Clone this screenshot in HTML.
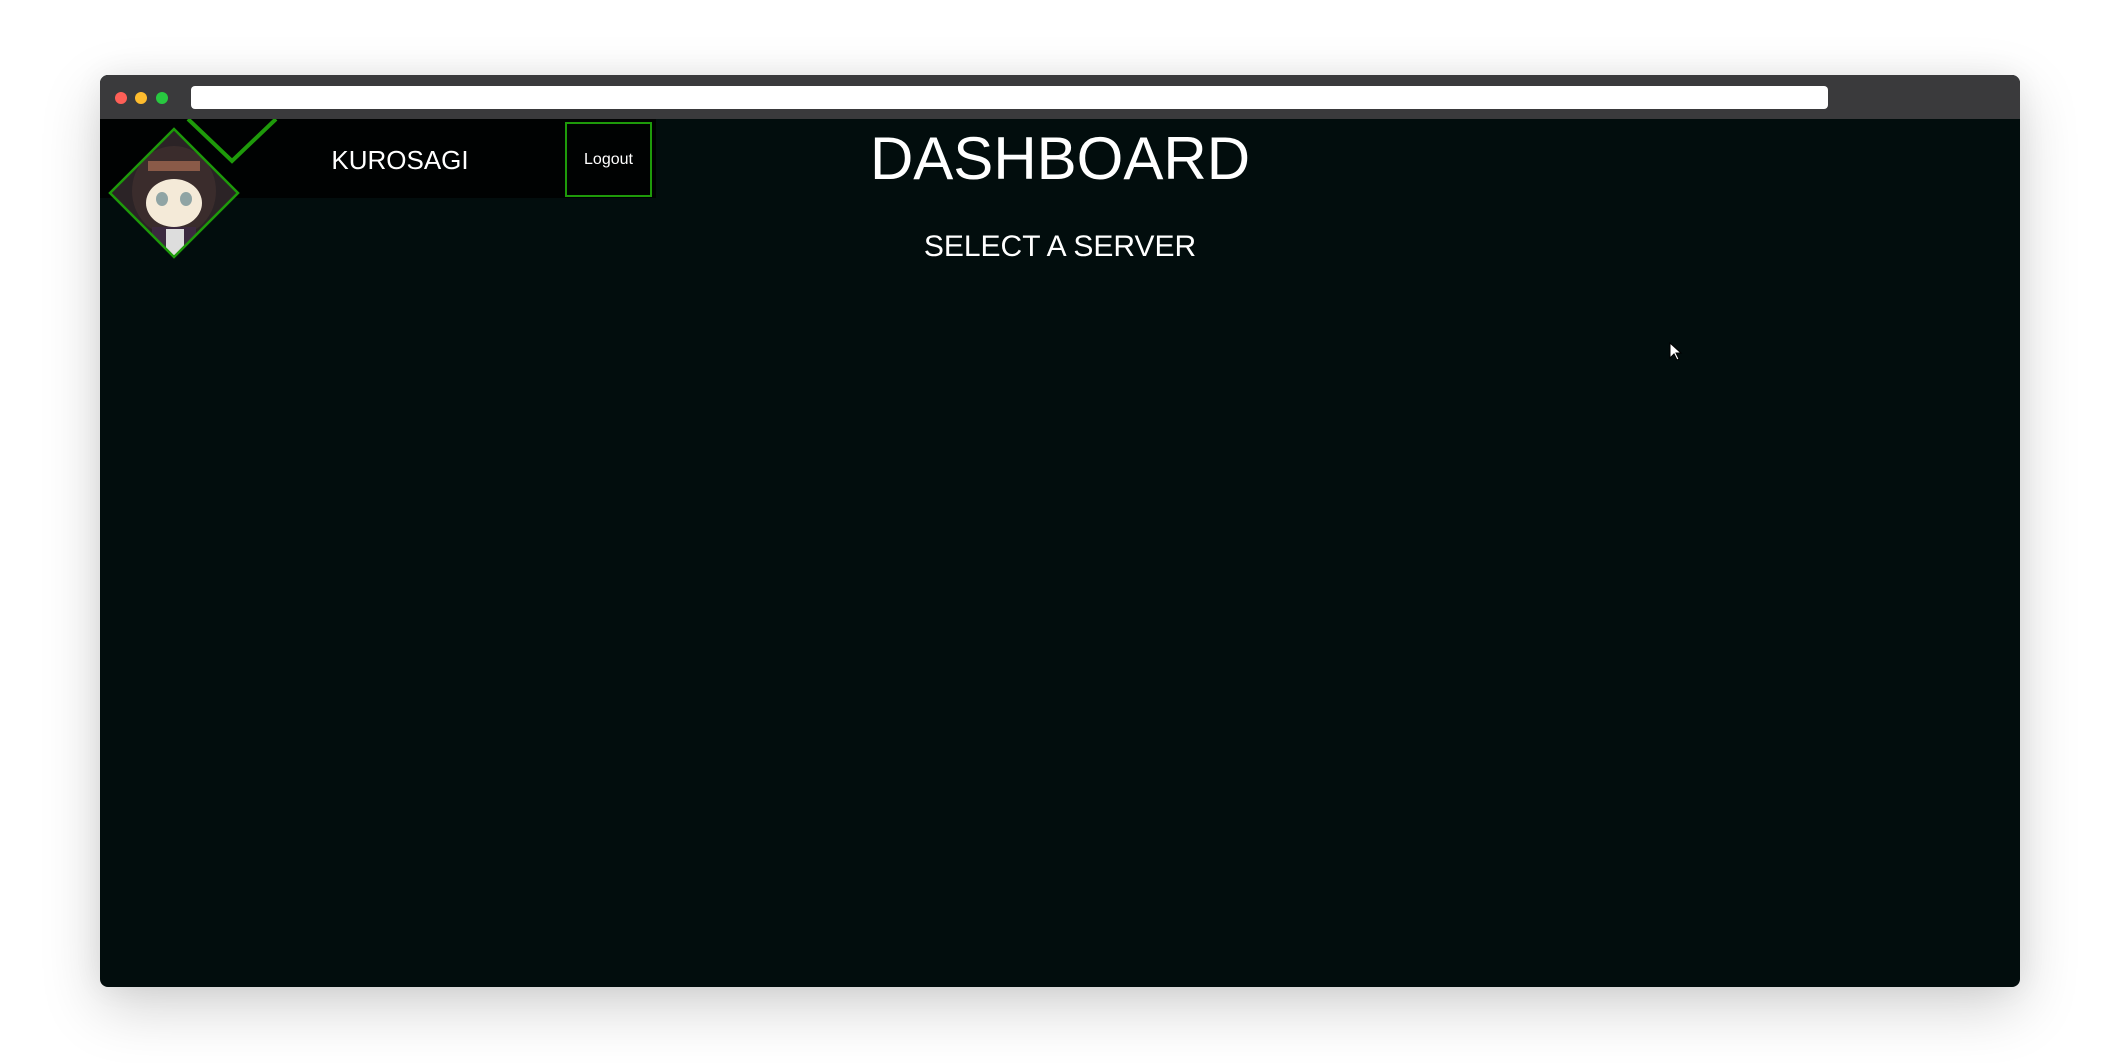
<!DOCTYPE html>
<html><head><meta charset="utf-8"><style>
html,body{margin:0;padding:0;width:2120px;height:1063px;background:#fff;overflow:hidden;font-family:"Liberation Sans",sans-serif}
.win{position:absolute;left:100px;top:75px;width:1920px;height:912px;border-radius:8px;overflow:hidden;background:#020d0d;box-shadow:0 20px 60px rgba(0,0,0,.18),0 0 30px rgba(0,0,0,.06)}
.bar{position:absolute;left:0;top:0;width:100%;height:44px;background:#3a3a3c}
.dot{position:absolute;top:17px;width:12px;height:12px;border-radius:50%}
.addr{position:absolute;left:91px;top:11px;width:1637px;height:23px;background:#fff;border-radius:4px}
.strip{position:absolute;left:0;top:44px;width:556px;height:79px;background:#000202}
.logout{position:absolute;left:465px;top:47px;width:83px;height:71px;border:2px solid #1e9a0a;color:#fff;font-size:16px;display:flex;align-items:center;justify-content:center}
.name{position:absolute;left:200px;top:70px;width:200px;text-align:center;color:#fff;font-size:26px}
.h1{position:absolute;left:0;width:100%;text-align:center;color:#fff}
</style></head><body>
<div class="win">
<div class="bar"><div class="dot" style="left:15px;background:#fe5f57"></div><div class="dot" style="left:35px;background:#febc2e"></div><div class="dot" style="left:56px;background:#28c840"></div><div class="addr"></div></div>
<div class="strip"></div>
<svg style="position:absolute;left:0;top:44px" width="200" height="160" viewBox="0 0 200 160">
<defs><clipPath id="d"><polygon points="74,10 138,74 74,138 10,74"/></clipPath></defs>
<g clip-path="url(#d)">
<rect x="0" y="0" width="200" height="160" fill="#2b2326"/>
<ellipse cx="74" cy="72" rx="42" ry="45" fill="#3a2c2c"/>
<rect x="48" y="42" width="52" height="10" fill="#8a5a48"/>
<ellipse cx="74" cy="84" rx="28" ry="24" fill="#f4ead8"/>
<ellipse cx="62" cy="80" rx="6" ry="7" fill="#8fa4a4"/>
<ellipse cx="86" cy="80" rx="6" ry="7" fill="#8fa4a4"/>
<rect x="52" y="108" width="44" height="30" fill="#3c2a40"/>
<rect x="66" y="110" width="18" height="26" fill="#ddd"/>
</g>
<polygon points="74,10 138,74 74,138 10,74" fill="none" stroke="#1e9a0a" stroke-width="2.5"/>
<polyline points="88,0 132,42 176,0" fill="none" stroke="#1e9a0a" stroke-width="4"/>
</svg>
<div class="name">KUROSAGI</div>
<div class="logout">Logout</div>
<div class="h1" style="top:46px;font-size:60px;line-height:76px">DASHBOARD</div>
<div class="h1" style="top:152px;font-size:30px;line-height:40px">SELECT A SERVER</div>
<svg style="position:absolute;left:1569px;top:267px" width="14" height="20" viewBox="0 0 14 20"><path d="M1 1 L1 16 L5 12 L8 18 L10 17 L7 11 L12 11 Z" fill="#fff" stroke="#000" stroke-width="1"/></svg>
</div>
</body></html>
